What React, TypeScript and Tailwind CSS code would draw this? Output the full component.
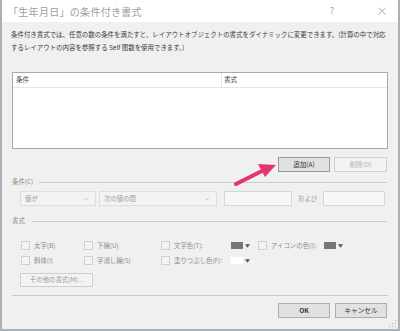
import React from "react";

function Cb({ label, w }: { label: string; w: number }) {
  return (
    <div className="flex items-center shrink-0" style={{ width: w }}>
      <div className="w-[9px] h-[9px] border border-[#cfcfcf] bg-[#f3f3f3] ml-[9px] shrink-0" />
      <span className="ml-[4px] text-[6.4px] text-[#8c8c8c] whitespace-nowrap">{label}</span>
    </div>
  );
}

function Swatch({ color, w }: { color: string; w: number }) {
  return (
    <div className="flex items-center shrink-0" style={{ width: w }}>
      <div className="w-[12px] h-[7px] shrink-0" style={{ background: color }} />
      <svg width="5" height="4" viewBox="0 0 6 4" className="ml-[2px] shrink-0">
        <path d="M0 0 L6 0 L3 4 Z" fill="#555" />
      </svg>
    </div>
  );
}

function Chev() {
  return (
    <svg width="6" height="4" viewBox="0 0 6 4" className="ml-auto mr-[6px]">
      <path d="M1 1 L3 3 L5 1" stroke="#c4c4c4" strokeWidth="0.8" fill="none" />
    </svg>
  );
}

function Btn({ children, w, cls }: { children: React.ReactNode; w: number; cls: string }) {
  return (
    <div
      className={"h-[15px] flex items-center justify-center text-[6.6px] whitespace-nowrap shrink-0 " + cls}
      style={{ width: w }}
    >
      {children}
    </div>
  );
}

export default function App() {
  return (
    <div className="relative w-[400px] h-[331px] overflow-hidden bg-[#f0f0f0] border-l-2 border-r-2 border-b-2 border-[#a8b0b8] flex flex-col font-['Noto_Sans_CJK_JP','Noto_Sans',sans-serif]">
      {/* title bar */}
      <div className="h-[22px] shrink-0 bg-white flex items-center pl-[6px] text-[#9d9d9d]">
        <span className="text-[10px] tracking-[0.3px]">「生年月日」の条件付き書式</span>
        <span className="ml-auto mr-[42px] text-[9px]">?</span>
        <span className="mr-[10px] text-[12px] font-light">×</span>
      </div>

      <div className="flex flex-col pl-[10px] pr-[10px]">
        {/* description */}
        <div className="mt-[6px] text-[6.45px] leading-[13px] text-[#3a3a3a] whitespace-nowrap ml-[-1px]">
          条件付き書式では、任意の数の条件を満たすと、レイアウトオブジェクトの書式をダイナミックに変更できます。(計算の中で対応
          <br />
          するレイアウトの内容を参照する Self 関数を使用できます。)
        </div>

        {/* list */}
        <div className="mt-[18px] h-[77px] border border-[#a9a9a9] bg-white flex flex-col">
          <div className="h-[15px] border-b border-[#e6e6e6] flex items-center text-[6.6px] text-[#444]">
            <div className="w-[209px] pl-[3px] h-full flex items-center border-r border-[#e6e6e6]">条件</div>
            <div className="pl-[2px]">書式</div>
          </div>
        </div>

        {/* add / delete */}
        <div className="mt-[8px] flex justify-end gap-[4px] pr-[1px]">
          <Btn w={52} cls="bg-[#e1e1e1] border border-[#9a9a9a] text-[#333]">追加(A)</Btn>
          <Btn w={53} cls="bg-[#f3f3f3] border border-[#d0d0d0] text-[#b0b0b0]">削除(D)</Btn>
        </div>

        {/* condition label */}
        <div className="mt-[5px] h-[10px] flex items-center">
          <span className="text-[6.4px] text-[#8c8c8c] whitespace-nowrap">条件(C)</span>
          <div className="flex-1 ml-[6px] mr-[1px] h-px bg-[#cdcdcd]" />
        </div>

        {/* condition row */}
        <div className="mt-[4px] h-[15px] flex items-center">
          <div className="ml-[8px] w-[76px] h-full border border-[#dedede] bg-[#f3f3f3] flex items-center pl-[4px] text-[6.4px] text-[#9a9a9a]">
            値が
            <Chev />
          </div>
          <div className="ml-[3px] w-[118px] h-full border border-[#dedede] bg-[#f3f3f3] flex items-center pl-[4px] text-[6.4px] text-[#9a9a9a]">
            次の値の間
            <Chev />
          </div>
          <div className="ml-[7px] w-[68px] h-full border border-[#d6d6d6] bg-[#f7f7f7]" />
          <span className="ml-[6px] text-[6.4px] text-[#9a9a9a] whitespace-nowrap">および</span>
          <div className="ml-[6px] w-[62px] h-full border border-[#d6d6d6] bg-[#f7f7f7]" />
        </div>

        {/* format label */}
        <div className="mt-[10px] h-[10px] flex items-center">
          <span className="text-[6.4px] text-[#8c8c8c] whitespace-nowrap">書式</span>
          <div className="flex-1 ml-[7px] mr-[1px] h-px bg-[#cdcdcd]" />
        </div>

        {/* checkbox row 1 */}
        <div className="mt-[13px] h-[13px] flex items-center">
          <Cb label="太字(B)" w={63} />
          <Cb label="下線(U)" w={77} />
          <Cb label="文字色(T):" w={79} />
          <Swatch color="#767676" w={18} />
          <Cb label="アイコンの色(I):" w={75} />
          <Swatch color="#767676" w={20} />
        </div>

        {/* checkbox row 2 */}
        <div className="mt-[2px] h-[13px] flex items-center">
          <Cb label="斜体(I)" w={63} />
          <Cb label="字消し線(S)" w={77} />
          <Cb label="塗りつぶし色(F):" w={79} />
          <Swatch color="#ffffff" w={18} />
        </div>

        {/* other formats */}
        <div className="mt-[6px] ml-[8px] w-[73px] h-[14px] border border-[#cfcfcf] bg-[#f3f3f3] flex items-center justify-center text-[6.4px] text-[#9a9a9a] whitespace-nowrap">
          その他の書式(M)...
        </div>

        {/* separator */}
        <div className="mt-[8px] h-px bg-[#c8c8c8]" />

        {/* OK / cancel */}
        <div className="mt-[7px] flex justify-end gap-[5px] pr-[1px]">
          <Btn w={52} cls="bg-[#e1e1e1] border border-[#adadad] text-[#333] font-semibold">OK</Btn>
          <Btn w={52} cls="bg-[#e1e1e1] border border-[#adadad] text-[#333]">キャンセル</Btn>
        </div>
      </div>

      {/* resize grip */}
      <svg width="8" height="8" viewBox="0 0 8 8" className="absolute right-[1px] bottom-[1px]">
        <g fill="#bdbdbd">
          <rect x="6" y="0" width="1.2" height="1.2" />
          <rect x="3" y="3" width="1.2" height="1.2" />
          <rect x="6" y="3" width="1.2" height="1.2" />
          <rect x="0" y="6" width="1.2" height="1.2" />
          <rect x="3" y="6" width="1.2" height="1.2" />
          <rect x="6" y="6" width="1.2" height="1.2" />
        </g>
      </svg>

      {/* pink arrow */}
      <svg width="400" height="331" className="absolute left-0 top-0 pointer-events-none">
        <line x1="234" y1="184" x2="262" y2="170" stroke="#e5336d" strokeWidth="4" strokeLinecap="round" />
        <polygon points="274,165 256,164 263,177" fill="#e5336d" />
      </svg>
    </div>
  );
}
